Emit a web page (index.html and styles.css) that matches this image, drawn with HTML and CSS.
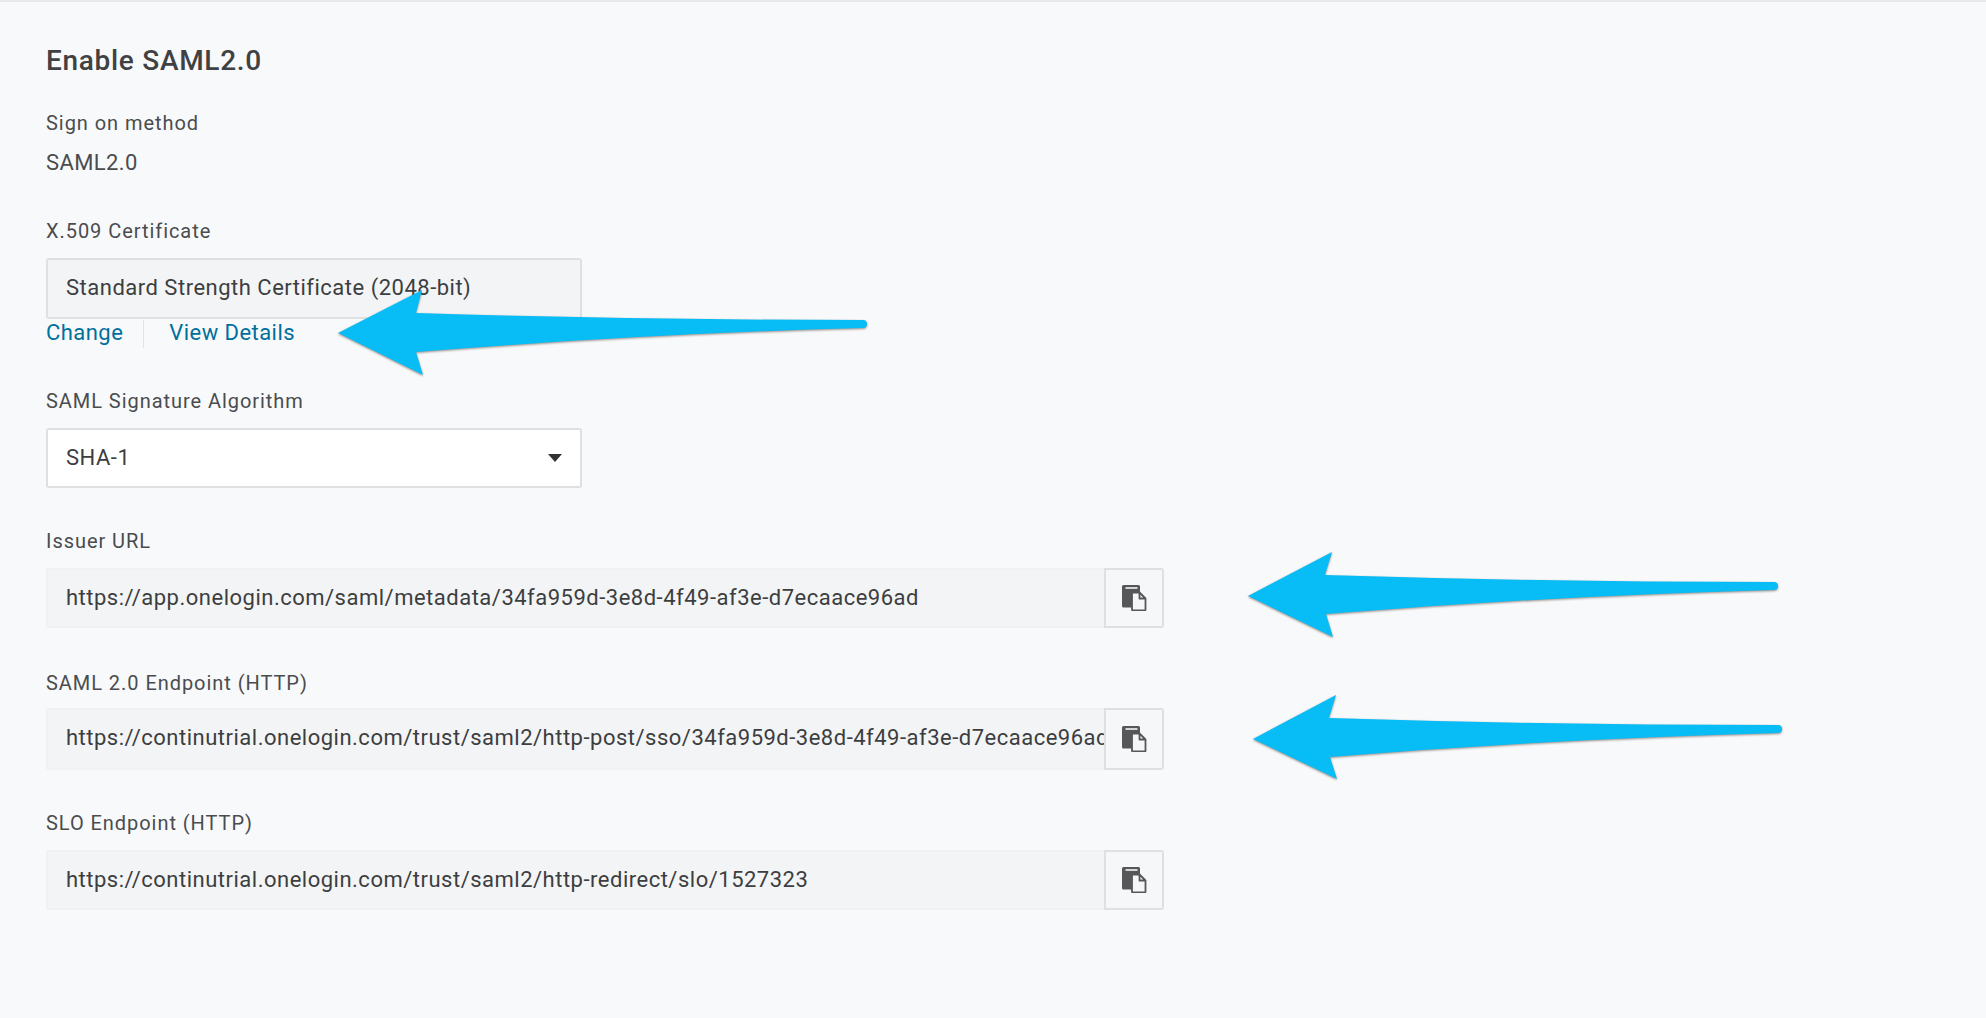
FILE: index.html
```html
<!DOCTYPE html>
<html lang="en">

<head>
    <meta charset="UTF-8">
    <meta name="viewport" content="width=device-width, initial-scale=1.0">
    <title>Enable SAML2.0</title>
    <link rel="stylesheet" href="styles.css">
</head>

<body>
    <div class="page">
        <h2 class="title">Enable SAML2.0</h2>

        <div class="group group-method">
            <div class="label">Sign on method</div>
            <div class="value">SAML2.0</div>
        </div>

        <div class="group group-cert">
            <div class="label">X.509 Certificate</div>
            <div class="box box-cert">Standard Strength Certificate (2048-bit)</div>
            <div class="links">
                <a href="#" class="link">Change</a>
                <a href="#" class="link link-second">View Details</a>
            </div>
        </div>

        <div class="group group-algo">
            <div class="label">SAML Signature Algorithm</div>
            <div class="box box-select">
                SHA-1
                <span class="caret"></span>
            </div>
        </div>

        <div class="group group-issuer">
            <div class="label">Issuer URL</div>
            <div class="copy-row">
                <div class="copy-text">https://app.onelogin.com/saml/metadata/34fa959d-3e8d-4f49-af3e-d7ecaace96ad</div>
                <button class="copy-btn">
                    <svg class="copy-icon" viewBox="0 0 26 26"><path class="clip" d="M1 1.5 a1.5 1.5 0 0 1 1.5 -1.5 h15 a1.5 1.5 0 0 1 1.5 1.5 v21 h-16.5 a1.5 1.5 0 0 1 -1.5 -1.5 z"/><rect class="clip-bar" x="4.5" y="2.2" width="12" height="1.6"/><path class="sheet" d="M11 7.5 h7.5 l6 6 v11 a1 1 0 0 1 -1 1 h-11.5 a1 1 0 0 1 -1 -1 z M18.5 7.5 v6 h6"/></svg>
                </button>
            </div>
        </div>

        <div class="group group-sso">
            <div class="label label-tight">SAML 2.0 Endpoint (HTTP)</div>
            <div class="copy-row copy-row-tall">
                <div class="copy-text">https://continutrial.onelogin.com/trust/saml2/http-post/sso/34fa959d-3e8d-4f49-af3e-d7ecaace96ad</div>
                <button class="copy-btn">
                    <svg class="copy-icon" viewBox="0 0 26 26"><path class="clip" d="M1 1.5 a1.5 1.5 0 0 1 1.5 -1.5 h15 a1.5 1.5 0 0 1 1.5 1.5 v21 h-16.5 a1.5 1.5 0 0 1 -1.5 -1.5 z"/><rect class="clip-bar" x="4.5" y="2.2" width="12" height="1.6"/><path class="sheet" d="M11 7.5 h7.5 l6 6 v11 a1 1 0 0 1 -1 1 h-11.5 a1 1 0 0 1 -1 -1 z M18.5 7.5 v6 h6"/></svg>
                </button>
            </div>
        </div>

        <div class="group group-slo">
            <div class="label">SLO Endpoint (HTTP)</div>
            <div class="copy-row">
                <div class="copy-text">https://continutrial.onelogin.com/trust/saml2/http-redirect/slo/1527323</div>
                <button class="copy-btn">
                    <svg class="copy-icon" viewBox="0 0 26 26"><path class="clip" d="M1 1.5 a1.5 1.5 0 0 1 1.5 -1.5 h15 a1.5 1.5 0 0 1 1.5 1.5 v21 h-16.5 a1.5 1.5 0 0 1 -1.5 -1.5 z"/><rect class="clip-bar" x="4.5" y="2.2" width="12" height="1.6"/><path class="sheet" d="M11 7.5 h7.5 l6 6 v11 a1 1 0 0 1 -1 1 h-11.5 a1 1 0 0 1 -1 -1 z M18.5 7.5 v6 h6"/></svg>
                </button>
            </div>
        </div>
    </div>

    <!-- Annotation arrows drawn on top of the screenshot -->
    <svg class="arrows" viewBox="0 0 1986 1018">
        <path d="M338 333 L422 290 L416 313 Q640 320 863 320 Q867 320 867 324 Q867 328 863 328 Q640 334 416 352 L423 375 Z"/>
        <path d="M1248 596 L1332 552 L1325 575 Q1550 582 1774 582 Q1778 582 1778 586 Q1778 590 1774 590 Q1550 596 1326 614 L1333 637 Z"/>
        <path d="M1253 739 L1336 695 L1329 718 Q1550 725 1778 725 Q1782 725 1782 729 Q1782 733 1778 733 Q1550 739 1330 757 L1337 779 Z"/>
    </svg>
</body>

</html>
```

FILE: styles.css
```css
* {
    margin: 0;
    padding: 0;
    box-sizing: border-box;
    font-family: Roboto, "Liberation Sans", sans-serif;
}

body {
    background-color: #f8f9fb;
    min-height: 100vh;
    position: relative;
    overflow: hidden;
}

.page {
    border-top: 2px solid #e8e9eb;
    padding: 0 46px;
    color: #4a4c4e;
}

.title {
    font-size: 28px;
    font-weight: 500;
    line-height: 36px;
    letter-spacing: 0.7px;
    margin-top: 41px;
    color: #3f4143;
}

.group-method {
    margin-top: 32px;
}

.group-cert {
    margin-top: 43px;
}

.group-algo {
    margin-top: 41px;
}

.group-issuer {
    margin-top: 41px;
}

.group-sso {
    margin-top: 43px;
}

.group-slo {
    margin-top: 41px;
}

.label {
    font-size: 20px;
    line-height: 24px;
    letter-spacing: 0.95px;
    margin-bottom: 15px;
}

.label-tight {
    margin-bottom: 13px;
}

.value {
    font-size: 22px;
    line-height: 26px;
    letter-spacing: 0.4px;
}

.box {
    width: 536px;
    border: 2px solid #dfe0e2;
    border-radius: 3px;
    padding: 0 18px;
    font-size: 22px;
    letter-spacing: 0.5px;
    color: #3c3e40;
    display: flex;
    align-items: center;
}

.box-cert {
    height: 61px;
    padding-bottom: 3px;
    background-color: #f3f4f6;
}

.box-select {
    height: 60px;
    padding-bottom: 2px;
    background-color: #fff;
    justify-content: space-between;
}

.caret {
    width: 0;
    height: 0;
    margin-top: 2px;
    border-left: 7px solid transparent;
    border-right: 7px solid transparent;
    border-top: 8px solid #333;
}

.links {
    display: flex;
    height: 28px;
    margin-top: 1px;
}

.link {
    font-size: 22px;
    line-height: 26px;
    letter-spacing: 0.45px;
    color: #00709b;
    text-decoration: none;
}

.link-second {
    margin-left: 20px;
    padding-left: 25px;
    border-left: 1px solid #e2e3e5;
}

.copy-row {
    display: flex;
    width: 1118px;
    height: 60px;
}

.copy-row-tall {
    height: 62px;
}

.copy-text {
    flex: 1;
    min-width: 0;
    background-color: #f3f4f6;
    border: 2px solid #f0f1f3;
    border-right: none;
    border-radius: 3px 0 0 3px;
    padding-left: 18px;
    font-size: 22px;
    letter-spacing: 0.5px;
    line-height: 56px;
    color: #3c3e40;
    white-space: nowrap;
    overflow: hidden;
}

.copy-btn {
    width: 60px;
    background-color: #f5f7f8;
    border: 2px solid #dfe0e2;
    border-radius: 0 3px 3px 0;
    display: flex;
    align-items: center;
    justify-content: center;
}

.copy-icon {
    width: 26px;
    height: 26px;
}

.clip {
    fill: #555758;
}

.clip-bar {
    fill: #f3f4f6;
}

.sheet {
    fill: #f5f6f7;
    stroke: #555758;
    stroke-width: 1.8;
    stroke-linejoin: round;
}

.arrows {
    position: absolute;
    top: 0;
    left: 0;
    width: 1986px;
    height: 1018px;
    fill: #08bcf5;
    filter: drop-shadow(0 1px 1px rgba(90, 70, 60, 0.6));
}
```
